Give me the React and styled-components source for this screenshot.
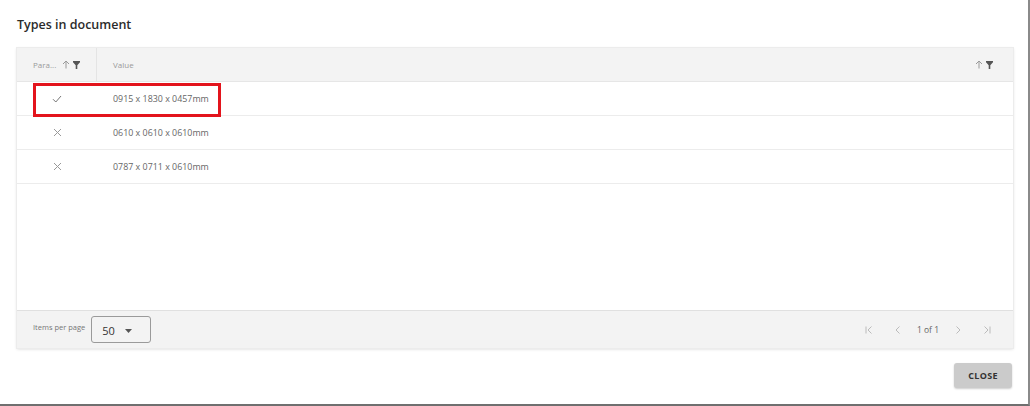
import React from "react";
import styled, { createGlobalStyle } from "styled-components";

const rows = [
  { ok: true, value: "0915 x 1830 x 0457mm", marked: true },
  { ok: false, value: "0610 x 0610 x 0610mm" },
  { ok: false, value: "0787 x 0711 x 0610mm" },
];

const GlobalStyle = createGlobalStyle`
  html, body {
    margin: 0;
    padding: 0;
    background: #fff;
    font-family: "Open Sans", "Noto Sans", Arial, sans-serif;
  }
`;

export default function App() {
  return (
    <>
      <GlobalStyle />
      <Dialog>
        <Title>Types in document</Title>
        <Card>
          <HeaderRow>
            <ParamHead>
              <HeadLabel>Para...</HeadLabel>
              <HeadIcons>
                <SortIcon />
                <FilterIcon />
              </HeadIcons>
            </ParamHead>
            <ValueHead>
              <HeadLabel>Value</HeadLabel>
              <HeadIcons>
                <SortIcon />
                <FilterIcon />
              </HeadIcons>
            </ValueHead>
          </HeaderRow>
          <Body>
            {rows.map((row) => (
              <Row key={row.value}>
                {row.marked && <Marker />}
                <ParamCell>{row.ok ? <CheckIcon /> : <CrossIcon />}</ParamCell>
                <ValueCell>{row.value}</ValueCell>
              </Row>
            ))}
          </Body>
          <Footer>
            <PerPage>
              <PerPageLabel>Items per page</PerPageLabel>
              <Select>
                <span>50</span>
                <Caret />
              </Select>
            </PerPage>
            <Pager>
              <PagerButton>
                <FirstIcon />
              </PagerButton>
              <PagerButton>
                <PrevIcon />
              </PagerButton>
              <PageText>1 of 1</PageText>
              <PagerButton>
                <NextIcon />
              </PagerButton>
              <PagerButton>
                <LastIcon />
              </PagerButton>
            </Pager>
          </Footer>
        </Card>
        <Actions>
          <CloseButton>CLOSE</CloseButton>
        </Actions>
      </Dialog>
    </>
  );
}

function SortIcon() {
  return (
    <svg width="8" height="9" viewBox="0 0 8 9">
      <path d="M4 8.5V1M1 4l3-3 3 3" fill="none" stroke="#999" strokeWidth="1" />
    </svg>
  );
}

function FilterIcon() {
  return (
    <svg width="7" height="8" viewBox="0 0 7 8">
      <path d="M0 0h7v1.3L4.3 4.2V8H2.7V4.2L0 1.3z" fill="#555" />
    </svg>
  );
}

function CheckIcon() {
  return (
    <svg width="10" height="8" viewBox="0 0 10 8">
      <path d="M1 4.2l2.8 2.8L9 1" fill="none" stroke="#777" strokeWidth="1" />
    </svg>
  );
}

function CrossIcon() {
  return (
    <svg width="9" height="9" viewBox="0 0 9 9">
      <path d="M1 1l7 7M8 1L1 8" fill="none" stroke="#999" strokeWidth="1" />
    </svg>
  );
}

function Caret() {
  return (
    <svg width="7" height="4" viewBox="0 0 7 4">
      <path d="M0 0h7L3.5 4z" fill="#555" />
    </svg>
  );
}

function FirstIcon() {
  return (
    <svg width="8" height="8" viewBox="0 0 8 8">
      <path d="M1 0.5v7M6.5 0.5L3 4l3.5 3.5" fill="none" stroke="#bbb" strokeWidth="1" />
    </svg>
  );
}

function PrevIcon() {
  return (
    <svg width="6" height="8" viewBox="0 0 6 8">
      <path d="M4.5 0.5L1 4l3.5 3.5" fill="none" stroke="#bbb" strokeWidth="1" />
    </svg>
  );
}

function NextIcon() {
  return (
    <svg width="6" height="8" viewBox="0 0 6 8">
      <path d="M1.5 0.5L5 4 1.5 7.5" fill="none" stroke="#bbb" strokeWidth="1" />
    </svg>
  );
}

function LastIcon() {
  return (
    <svg width="8" height="8" viewBox="0 0 8 8">
      <path d="M7 0.5v7M1.5 0.5L5 4 1.5 7.5" fill="none" stroke="#bbb" strokeWidth="1" />
    </svg>
  );
}

const Dialog = styled.div`
  box-sizing: border-box;
  width: 1030px;
  height: 406px;
  border-right: 2px solid #8a8a8a;
  border-bottom: 2px solid #6f6f6f;
  background: #fff;
  padding: 16px 15px 0 16px;
  display: flex;
  flex-direction: column;
`;

const Title = styled.div`
  font-size: 12.5px;
  font-weight: 600;
  color: #2b2b2b;
  height: 18px;
  line-height: 18px;
  padding-left: 1px;
  margin-bottom: 14px;
`;

const Card = styled.div`
  margin-left: 1px;
  width: 996px;
  height: 300px;
  display: flex;
  flex-direction: column;
  background: #fff;
  box-shadow: 0 0 0 1px #ececec, 0 1px 3px rgba(0, 0, 0, 0.18);
`;

const HeaderRow = styled.div`
  display: flex;
  height: 34px;
  background: #f3f3f3;
  border-bottom: 1px solid #e6e6e6;
  box-sizing: border-box;
`;

const ParamHead = styled.div`
  width: 80px;
  box-sizing: border-box;
  border-right: 1px solid #e4e4e4;
  display: flex;
  align-items: center;
  justify-content: space-between;
  padding: 0 16px 0 16px;
`;

const ValueHead = styled.div`
  flex: 1;
  display: flex;
  align-items: center;
  justify-content: space-between;
  padding: 0 20px 0 16px;
`;

const HeadLabel = styled.span`
  font-size: 8px;
  color: #9a9a9a;
`;

const HeadIcons = styled.span`
  display: flex;
  align-items: center;
  gap: 3px;
`;

const Body = styled.div`
  flex: 1;
`;

const Row = styled.div`
  position: relative;
  display: flex;
  height: 34px;
  box-sizing: border-box;
  border-bottom: 1px solid #ececec;
  align-items: center;
`;

const Marker = styled.div`
  position: absolute;
  left: 16px;
  top: 1px;
  width: 188px;
  height: 34px;
  box-sizing: border-box;
  border: 3px solid #e3141c;
`;

const ParamCell = styled.div`
  width: 80px;
  display: flex;
  justify-content: center;
  align-items: center;
`;

const ValueCell = styled.div`
  padding-left: 16px;
  font-size: 8.9px;
  color: #666;
`;

const Footer = styled.div`
  height: 38px;
  background: #f3f3f3;
  border-top: 1px solid #e0e0e0;
  box-sizing: border-box;
  display: flex;
  align-items: center;
  justify-content: space-between;
  padding: 0 12px 0 16px;
`;

const PerPage = styled.div`
  display: flex;
  align-items: center;
  gap: 6px;
`;

const PerPageLabel = styled.span`
  font-size: 7.5px;
  color: #777;
  margin-top: -6px;
`;

const Select = styled.div`
  width: 60px;
  height: 27px;
  box-sizing: border-box;
  border: 1px solid #9a9a9a;
  border-radius: 3px;
  display: flex;
  align-items: center;
  padding: 2px 18px 0 10px;
  justify-content: space-between;
  font-size: 11px;
  color: #333;
`;

const Pager = styled.div`
  display: flex;
  align-items: center;
`;

const PagerButton = styled.span`
  width: 29px;
  display: flex;
  justify-content: center;
  align-items: center;
`;

const PageText = styled.span`
  font-size: 8.5px;
  font-weight: 400;
  color: #666;
  padding: 0 4px;
`;

const Actions = styled.div`
  display: flex;
  justify-content: flex-end;
  padding-top: 15px;
  padding-right: 1px;
`;

const CloseButton = styled.button`
  width: 58px;
  height: 25px;
  border: none;
  border-radius: 3px;
  background: #cbcbcb;
  box-shadow: 0 1px 2px rgba(0, 0, 0, 0.2);
  font-family: "Open Sans", "Noto Sans", Arial, sans-serif;
  font-size: 9px;
  font-weight: 700;
  color: #333;
  letter-spacing: 0.3px;
  padding: 0;
`;
